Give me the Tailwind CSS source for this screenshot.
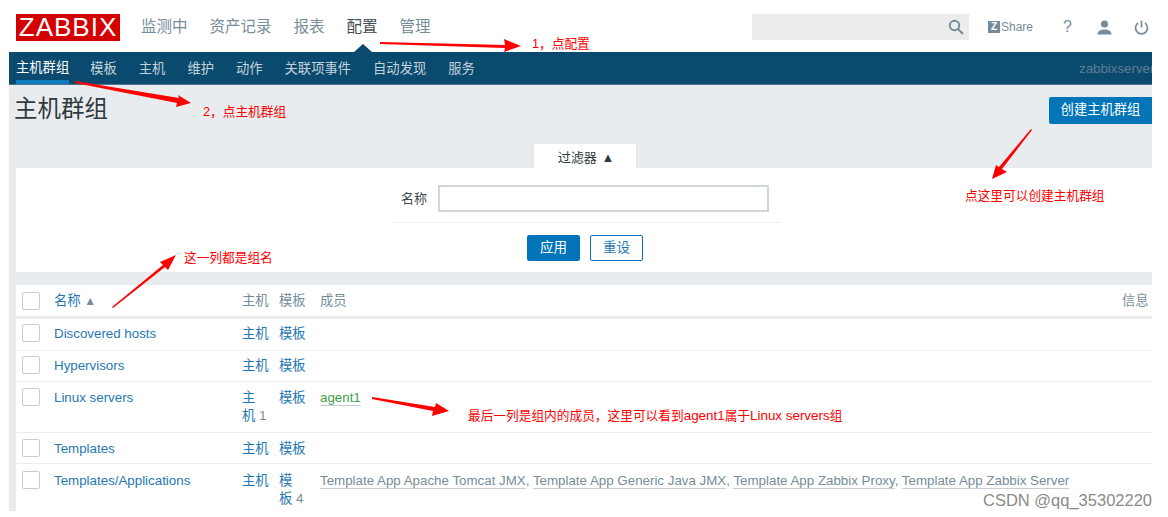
<!DOCTYPE html>
<html>
<head>
  <title>主机群组</title>
  <script src="https://cdn.jsdelivr.net/npm/@tailwindcss/browser@4"></script>
</head>
<body class="relative h-[517px] overflow-hidden bg-white font-['Liberation_Sans','Noto_Sans_CJK_SC',sans-serif]">
  <div class="ml-[9px] w-[1143px] overflow-hidden">
    <!-- top menu -->
    <header class="flex h-[52px] items-center bg-white pt-[2px] pr-[3px] pl-[7px]">
      <div class="flex h-[27px] w-[104px] items-center justify-center bg-[#d40000] text-[26px] leading-none tracking-[1px] text-white">ZABBIX</div>
      <nav class="ml-[21px] flex gap-[22px] text-[15.5px] text-[#768d99]">
        <a>监测中</a>
        <a>资产记录</a>
        <a>报表</a>
        <a class="text-[#444f55]">配置</a>
        <a>管理</a>
      </nav>
      <div class="ml-auto flex h-[26px] w-[217px] items-center justify-end bg-[#ececec] pr-[5px]">
        <svg class="h-[16px] w-[16px] text-[#768d99]" viewBox="0 0 16 16" fill="none" stroke="currentColor" stroke-width="2"><circle cx="6.500" cy="6.500" r="4.700"/><path d="M10 10l5 5"/></svg>
      </div>
      <div class="ml-[19px] flex items-center text-[12px] text-[#768d99]">
        <span class="flex h-[12px] w-[12px] items-center justify-center bg-[#768d99] text-[10px] font-bold leading-none text-white">Z</span>
        <span class="ml-[1px]">Share</span>
      </div>
      <span class="ml-[30px] w-[10px] text-[16px] text-[#768d99]">?</span>
      <svg class="ml-[24px] h-[15px] w-[15px] text-[#768d99]" viewBox="0 0 15 15" fill="currentColor"><circle cx="7.500" cy="4" r="3.600"/><path d="M0.500 14.500c0-3.600 3-5 7-5s7 1.400 7 5z"/></svg>
      <svg class="ml-[22px] h-[15px] w-[15px] shrink-0 text-[#768d99]" viewBox="0 0 15 15" fill="none" stroke="currentColor" stroke-width="1.700"><path d="M4 3a6 6 0 1 0 7 0"/><path d="M7.500 0.500v7"/></svg>
    </header>

    <!-- sub menu -->
    <div class="flex h-[33px] items-stretch justify-between border-b border-[#4a7590] bg-[#0b4a6f] pl-[7px] text-[13.300px]">
      <nav class="flex gap-[22px] text-[#c4d2da]">
        <a class="-mr-[1px] flex items-center border-b-[4px] border-[#0f7bbf] pt-[4px] text-white">主机群组</a>
        <a class="flex items-center pt-[1px]">模板</a>
        <a class="flex items-center pt-[1px]">主机</a>
        <a class="flex items-center pt-[1px]">维护</a>
        <a class="flex items-center pt-[1px]">动作</a>
        <a class="flex items-center pt-[1px]">关联项事件</a>
        <a class="flex items-center pt-[1px]">自动发现</a>
        <a class="flex items-center pt-[1px]">服务</a>
      </nav>
      <span class="flex w-[73px] items-center overflow-hidden pt-[1px] whitespace-nowrap text-[#5d7f95]">zabbixserver</span>
    </div>

    <main class="h-[426px] overflow-hidden bg-[#e9ecef] pl-[7px]">
      <div class="flex h-[58px] items-center justify-between pb-[8px]">
        <h1 class="-ml-[2px] text-[23.500px] leading-none text-[#2f3a40]">主机群组</h1>
        <button class="h-[27px] w-[103px] rounded-l-[2px] bg-[#0275b8] text-[13.300px] text-white">创建主机群组</button>
      </div>

      <!-- filter -->
      <div class="flex justify-center pl-[1px]">
        <div class="h-[25px] w-[104px] border-x border-t border-[#e4e8ea] bg-white pl-[3px] text-center text-[13px] leading-[27px] text-[#2f3a40]">过滤器 <span class="ml-[1px]">▲</span></div>
      </div>
      <section class="h-[104px] bg-white pt-[17px]">
        <div class="ml-[375px] w-[389px] border-b border-[#ebeef0] pb-[10px]">
          <div class="flex items-center pl-[10px]">
            <label class="w-[37px] text-[13px] text-[#3f4a50]">名称</label>
            <input type="text" class="h-[27px] w-[331px] border-2 border-[#d0d7db] bg-white">
          </div>
        </div>
        <div class="mt-[12px] ml-[511px] flex gap-[10px] text-[13.500px]">
          <button class="h-[26px] w-[53px] rounded-[2px] bg-[#0275b8] text-white">应用</button>
          <button class="h-[26px] w-[53px] rounded-[2px] border border-[#0275b8] bg-white text-[#1f78b4]">重设</button>
        </div>
      </section>

      <!-- list -->
      <table class="mt-[13px] w-full table-fixed border-collapse bg-white text-[13.330px] leading-[18.500px]">
        <colgroup>
          <col class="w-[38px]"><col class="w-[188px]"><col class="w-[37px]"><col class="w-[41px]"><col><col class="w-[30px]">
        </colgroup>
        <thead>
          <tr class="h-[32px] border-b-[3px] border-[#e9ecef] text-left text-[#768d99]">
            <th class="pl-[6px] pt-[2px] align-middle font-normal"><span class="block h-[18px] w-[18px] rounded-[2px] border border-[#c5ced3]"></span></th>
            <th class="pt-[2px] font-normal text-[#1f78b4]">名称 <span class="text-[12px] text-[#768d99]">▲</span></th>
            <th class="pt-[2px] font-normal">主机</th>
            <th class="pt-[2px] font-normal">模板</th>
            <th class="pt-[2px] font-normal">成员</th>
            <th class="pt-[2px] font-normal">信息</th>
          </tr>
        </thead>
        <tbody class="text-[#1f78b4]">
          <tr class="h-[33px] border-b border-[#ebeef0]">
            <td class="pl-[6px] pt-[5px] align-top"><span class="block h-[18px] w-[18px] rounded-[2px] border border-[#c5ced3]"></span></td>
            <td class="pt-[6px] align-top">Discovered hosts</td>
            <td class="pt-[6px] align-top">主机</td>
            <td class="pt-[6px] align-top">模板</td>
            <td></td><td></td>
          </tr>
          <tr class="h-[31px] border-b border-[#ebeef0]">
            <td class="pl-[6px] pt-[5px] align-top"><span class="block h-[18px] w-[18px] rounded-[2px] border border-[#c5ced3]"></span></td>
            <td class="pt-[6px] align-top">Hypervisors</td>
            <td class="pt-[6px] align-top">主机</td>
            <td class="pt-[6px] align-top">模板</td>
            <td></td><td></td>
          </tr>
          <tr class="h-[51px] border-b border-[#ebeef0]">
            <td class="pl-[6px] pt-[6px] align-top"><span class="block h-[18px] w-[18px] rounded-[2px] border border-[#c5ced3]"></span></td>
            <td class="pt-[7px] align-top">Linux servers</td>
            <td class="pt-[7px] align-top">主<br>机 <span class="text-[#768d99]">1</span></td>
            <td class="pt-[7px] align-top">模板</td>
            <td class="pt-[7px] align-top"><span class="border-b border-[#c5ced3] text-[#429e47]">agent1</span></td>
            <td></td>
          </tr>
          <tr class="h-[31px] border-b border-[#ebeef0]">
            <td class="pl-[6px] pt-[6px] align-top"><span class="block h-[18px] w-[18px] rounded-[2px] border border-[#c5ced3]"></span></td>
            <td class="pt-[7px] align-top">Templates</td>
            <td class="pt-[7px] align-top">主机</td>
            <td class="pt-[7px] align-top">模板</td>
            <td></td><td></td>
          </tr>
          <tr class="h-[48px]">
            <td class="pl-[6px] pt-[7px] align-top"><span class="block h-[18px] w-[18px] rounded-[2px] border border-[#c5ced3]"></span></td>
            <td class="pt-[8px] align-top">Templates/Applications</td>
            <td class="pt-[8px] align-top">主机</td>
            <td class="pt-[8px] align-top">模<br>板 <span class="text-[#768d99]">4</span></td>
            <td colspan="2" class="whitespace-nowrap pt-[8px] align-top text-[#768d99]"><span class="border-b border-[#c5ced3]">Template App Apache Tomcat JMX</span>, <span class="border-b border-[#c5ced3]">Template App Generic Java JMX</span>, <span class="border-b border-[#c5ced3]">Template App Zabbix Proxy</span>, <span class="border-b border-[#c5ced3]">Template App Zabbix Server</span></td>
          </tr>
        </tbody>
      </table>
    </main>
  </div>

  <!-- annotations drawn over the screenshot -->
  <svg class="absolute top-0 left-0 h-[517px] w-[1168px]" viewBox="0 0 1168 517" fill="#ff0000">
    <polygon points="363,44 354,52 372,52" fill="#0b4a6f"/>
    <polygon points="380,42 505,45 504,39 521,46 504,52 505,48 380,44"/>
    <polygon points="75,81 179,98 178,95 191,103 176,107 177,103 75,83"/>
    <polygon points="112,307 163,265 160,262 176,255 168,270 165,267 113,308"/>
    <polygon points="1032,130 1002,169 1007,172 992,179 996,165 999,167 1031,129"/>
    <polygon points="372,397 435,407 436,403 449,411 432,416 433,411 372,399"/>
  </svg>
  <span class="absolute top-[35px] left-[532px] text-[12.700px] whitespace-nowrap text-[#ff0000]">1，点配置</span>
  <span class="absolute top-[103px] left-[203px] text-[12.700px] whitespace-nowrap text-[#ff0000]">2，点主机群组</span>
  <span class="absolute top-[187px] left-[965px] text-[12.700px] whitespace-nowrap text-[#ff0000]">点这里可以创建主机群组</span>
  <span class="absolute top-[249px] left-[184px] text-[12.700px] whitespace-nowrap text-[#ff0000]">这一列都是组名</span>
  <span class="absolute top-[406px] left-[468px] text-[12.700px] whitespace-nowrap text-[#ff0000]">最后一列是组内的成员，这里可以看到<span class="text-[13.400px]">agent1</span>属于<span class="text-[13.400px]">Linux servers</span>组</span>
  <span class="absolute top-[488px] left-[983px] text-[16.500px] whitespace-nowrap text-[#8a8a8a]">CSDN @qq_35302220</span>
</body>
</html>
